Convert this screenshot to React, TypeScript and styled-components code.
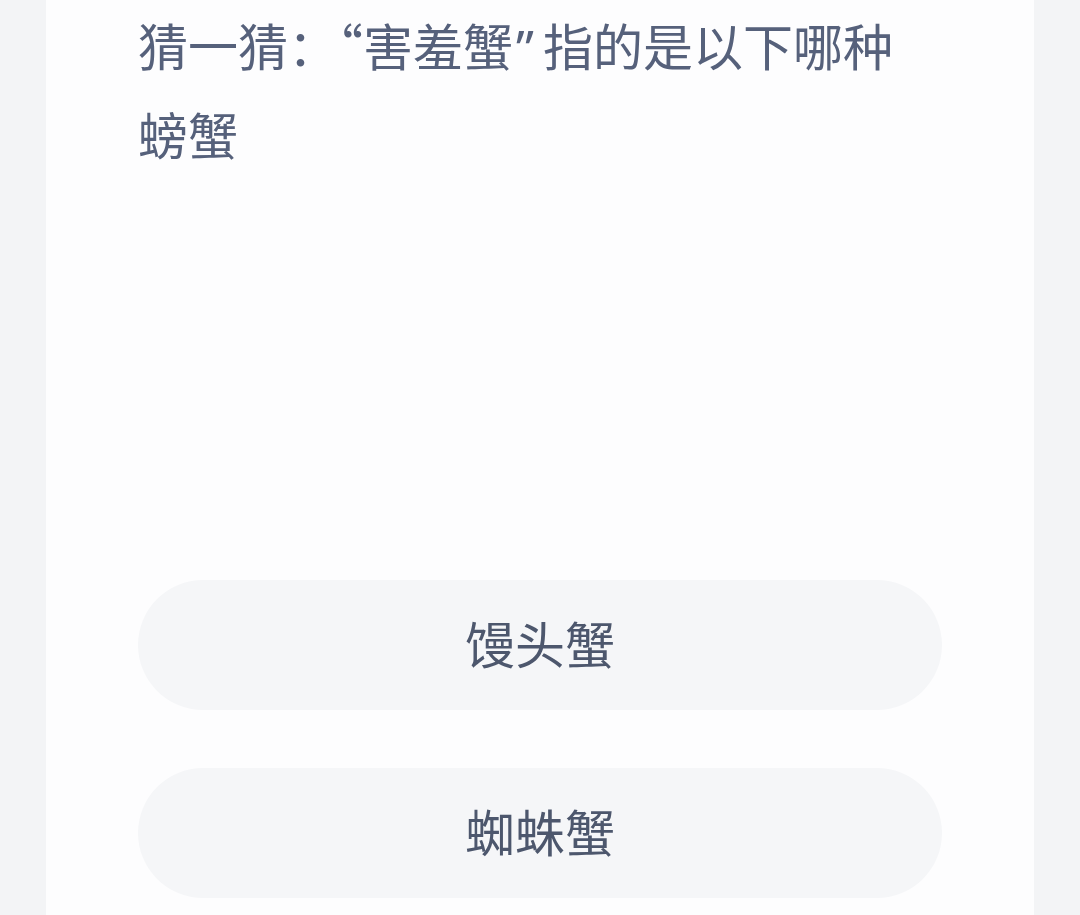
import styled, { createGlobalStyle } from "styled-components";

const GlobalStyle = createGlobalStyle`
    html, body {
        margin: 0;
        padding: 0;
        background-color: #f3f4f6;
    }
    body {
        font-family: "Noto Sans CJK SC", "Noto Sans", sans-serif;
    }
`;

const Page = styled.div`
    display: flex;
    justify-content: center;
    height: 915px;
    overflow: hidden;
`;

const Card = styled.div`
    width: 988px;
    box-sizing: border-box;
    background-color: #fdfdfe;
    padding: 0 92px;
    display: flex;
    flex-direction: column;
`;

const Question = styled.h2`
    margin: 0;
    padding-top: 1px;
    font-size: 50px;
    font-weight: 400;
    line-height: 86px;
    color: #56617b;
    height: 172px;
`;

// closing quote set in the latin face so it stays half width
const Quote = styled.span`
    font-family: "Noto Sans", sans-serif;
    padding: 0 9px 0 3px;
`;

const Options = styled.div`
    margin-top: 407px;
    display: flex;
    flex-direction: column;
    gap: 58px;
`;

const Option = styled.button`
    height: 130px;
    border: none;
    border-radius: 65px;
    background-color: #f5f6f8;
    font-family: "Noto Sans CJK SC", "Noto Sans", sans-serif;
    font-size: 50px;
    line-height: 1;
    color: #4d576d;
    cursor: pointer;
    padding: 0 0 6px;
`;

const options = ["馒头蟹", "蜘蛛蟹"];

export default function App() {
    return (
        <>
            <GlobalStyle />
            <Page>
                <Card>
                    <Question>
                        猜一猜：“害羞蟹<Quote>”</Quote>指的是以下哪种螃蟹
                    </Question>
                    <Options>
                        {options.map((text) => (
                            <Option key={text}>{text}</Option>
                        ))}
                    </Options>
                </Card>
            </Page>
        </>
    );
}
